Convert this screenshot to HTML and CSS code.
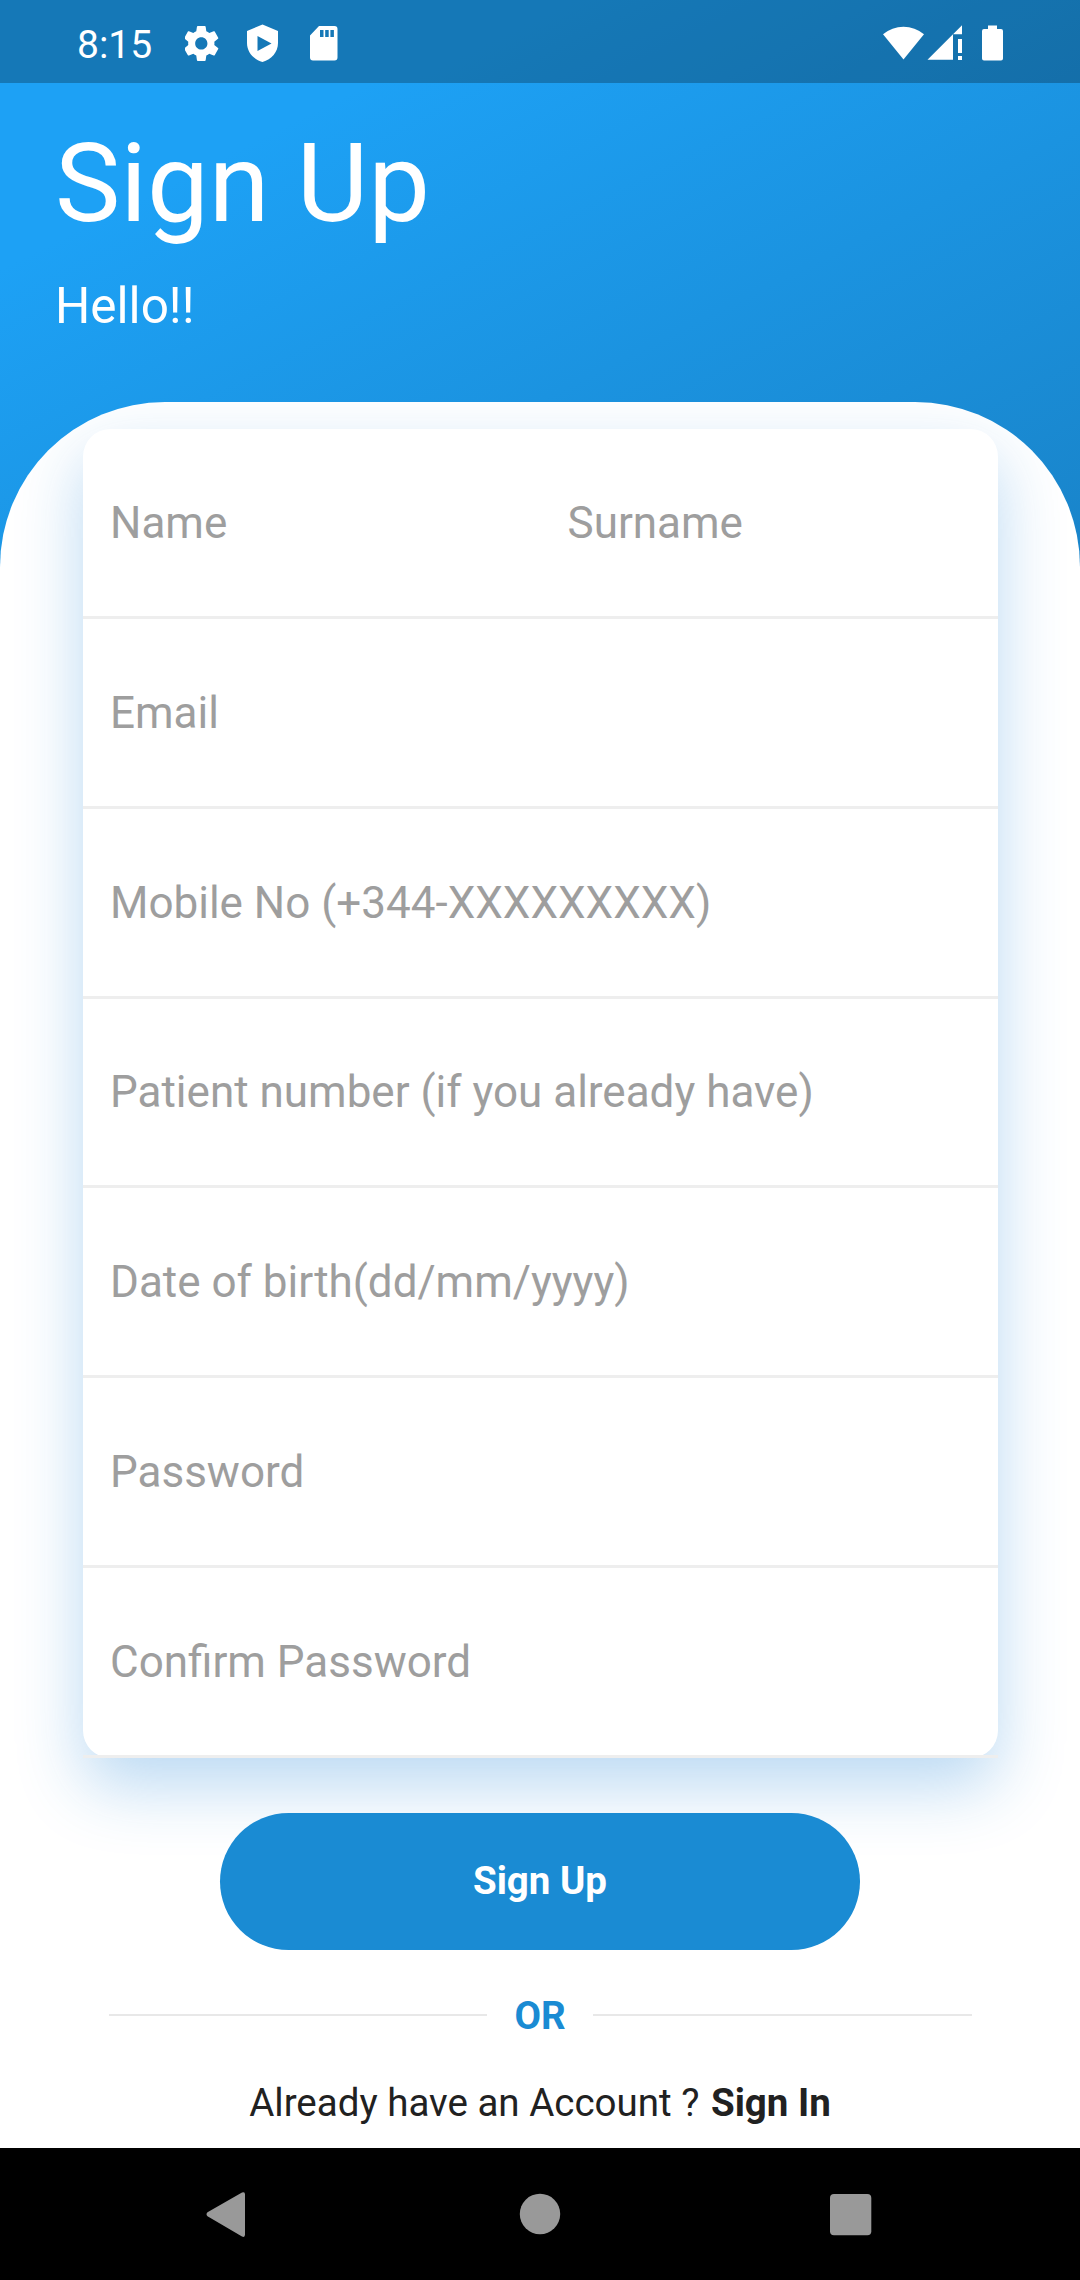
FILE: index.html
```html
<!DOCTYPE html>
<html lang="en">
<head>
<meta charset="utf-8">
<title>Sign Up</title>
<link rel="stylesheet" href="styles.css">
</head>
<body>
<div class="screen">
  <div class="status-bar">
    <span class="clock">8:15</span>
    <svg class="status-icons-left" width="160" height="83" viewBox="0 0 160 83" fill="#fff">
      <path transform="translate(-4.700 22.400) scale(1.750)" d="M19.430 12.980c.04-.32.070-.64.070-.98s-.03-.66-.07-.98l2.110-1.650c.19-.15.240-.42.120-.64l-2-3.460c-.12-.22-.39-.3-.61-.22l-2.490 1c-.52-.4-1.080-.73-1.690-.98l-.38-2.650C14.460 2.180 14.250 2 14 2h-4c-.25 0-.46.180-.49.420l-.38 2.650c-.61.250-1.170.590-1.690.980l-2.490-1c-.23-.09-.49 0-.61.220l-2 3.460c-.13.220-.07.490.120.640l2.110 1.650c-.04.320-.07.650-.07.980s.030.660.070.980l-2.110 1.650c-.19.150-.24.420-.12.640l2 3.460c.12.220.39.300.61.220l2.490-1c.52.400 1.080.730 1.690.980l.38 2.650c.03.240.24.420.49.420h4c.25 0 .46-.18.490-.42l.38-2.650c.61-.25 1.170-.59 1.690-.98l2.490 1c.23.090.49 0 .61-.22l2-3.460c.12-.22.070-.49-.12-.64l-2.110-1.650zM12 15.500c-1.930 0-3.500-1.570-3.500-3.500s1.570-3.500 3.500-3.500 3.500 1.570 3.500 3.500-1.570 3.500-3.500 3.500z"/>
      <path fill-rule="evenodd" d="M77.500 24.500l15.500 6.500v12c0 9-6.500 16.500-15.500 19-9-2.500-15.500-10-15.500-19V31zM72.500 36v15l14-7.500z"/>
      <path fill-rule="evenodd" d="M134 26h15.500q3 0 3 3v28.500q0 3-3 3H128q-3 0-3-3V35.500zM135 30v7h3.500v-7zm5.200 0v7h3.500v-7zm5.200 0v7h3.500v-7z"/>
    </svg>
    <svg class="status-icons-right" width="122" height="83" viewBox="0 0 122 83" fill="#fff">
      <path d="M0 34.300a32 32 0 0 1 41 0L20.500 59.500z"/>
      <path d="M44.500 59.700H70V34.200zM70 34.200h9V25.300zM75 39h4v14h-4zM75 56h4v4h-4z"/>
      <path d="M105 25.500h9v3.500h4q2 0 2 2v27.500q0 2-2 2h-17q-2 0-2-2V31q0-2 2-2h4z"/>
    </svg>
  </div>
  <header class="hero">
    <h1 class="title">Sign Up</h1>
    <p class="subtitle">Hello!!</p>
  </header>
  <main class="sheet">
    <form class="card">
      <div class="row"><span class="field">Name</span><span class="field">Surname</span></div>
      <div class="row"><span class="field">Email</span></div>
      <div class="row"><span class="field">Mobile No (+344-XXXXXXXXX)</span></div>
      <div class="row"><span class="field">Patient number (if you already have)</span></div>
      <div class="row"><span class="field">Date of birth(dd/mm/yyyy)</span></div>
      <div class="row"><span class="field">Password</span></div>
      <div class="row"><span class="field">Confirm Password</span></div>
    </form>
    <button class="submit" type="button">Sign Up</button>
    <div class="divider"><span class="rule"></span><span class="or">OR</span><span class="rule"></span></div>
    <p class="signin">Already have an Account ? <b>Sign In</b></p>
  </main>
  <nav class="nav-bar">
    <svg width="1080" height="132" viewBox="0 0 1080 132" fill="#999">
      <path d="M207.500 64.300 242 44.600q3-1.500 3 2v40q0 3.500-3 2L207.500 68.200q-2-2 0-3.900z"/>
      <circle cx="540" cy="66" r="20.200"/>
      <rect x="830" y="46" width="41.300" height="41.300" rx="4"/>
    </svg>
  </nav>
</div>
</body>
</html>
```
FILE: styles.css
```css
* { box-sizing: border-box; }

body {
  margin: 0;
  font-family: Roboto, sans-serif;
  background: #000;
}

.screen {
  width: 1080px;
  height: 2280px;
  display: flex;
  flex-direction: column;
  overflow: hidden;
  background: linear-gradient(153.300deg, #1da1f5 0, #1da1f5 240px, #1985cb 960px, #1985cb 100%);
}

.status-bar {
  flex: none;
  height: 83px;
  display: flex;
  align-items: center;
  padding: 0 76px 0 77px;
  background: rgba(0, 0, 0, 0.25);
  color: #fff;
}

.clock {
  width: 76px;
  margin-top: 7px;
  font-size: 39px;
  line-height: 46px;
  white-space: nowrap;
}

.status-icons-left { margin-left: 32px; }
.status-icons-right { margin-left: auto; margin-right: -1px; }

.hero {
  flex: none;
  height: 319.300px;
  padding: 36px 55px 0;
  color: #fff;
}

.title {
  margin: 0;
  font-size: 110px;
  font-weight: 400;
  line-height: 129px;
}

.subtitle {
  margin: 29px 0 0;
  font-size: 49.500px;
  line-height: 58px;
}

.sheet {
  flex: 1;
  padding: 27px 82.500px 0;
  border-radius: 165px 165px 0 0;
  background: #fff;
  overflow: hidden;
}

.card {
  border-radius: 27.500px;
  background: #fff;
  box-shadow: 0 27.500px 66px rgba(27, 130, 216, 0.3);
}

.row {
  height: 189.750px;
  display: flex;
  align-items: center;
  padding-top: 1px;
  border-bottom: 3px solid #eee;
}

.field {
  flex: 1;
  padding-left: 27.500px;
  font-size: 44px;
  line-height: 52px;
  color: #9e9e9e;
}

.submit {
  display: block;
  width: 640px;
  height: 137.500px;
  margin: 55px auto 0;
  padding: 0;
  border: 0;
  border-radius: 69px;
  background: #1a8bd3;
  color: #fff;
  font: 700 38.500px/46px Roboto, sans-serif;
}

.divider {
  display: flex;
  align-items: center;
  margin: 42.500px 26px 0;
}

.rule {
  flex: 1;
  height: 2px;
  background: #e8e8e8;
}

.or {
  width: 106px;
  text-align: center;
  font-size: 38.500px;
  font-weight: 700;
  line-height: 45px;
  color: #1a8bd3;
}

.signin {
  margin: 42.500px 0 0;
  text-align: center;
  font-size: 38.500px;
  line-height: 45px;
  color: #212121;
}

.signin b { margin-left: 2px; }

.nav-bar {
  flex: none;
  height: 132px;
  background: #000;
}

.nav-bar svg { display: block; }
```
